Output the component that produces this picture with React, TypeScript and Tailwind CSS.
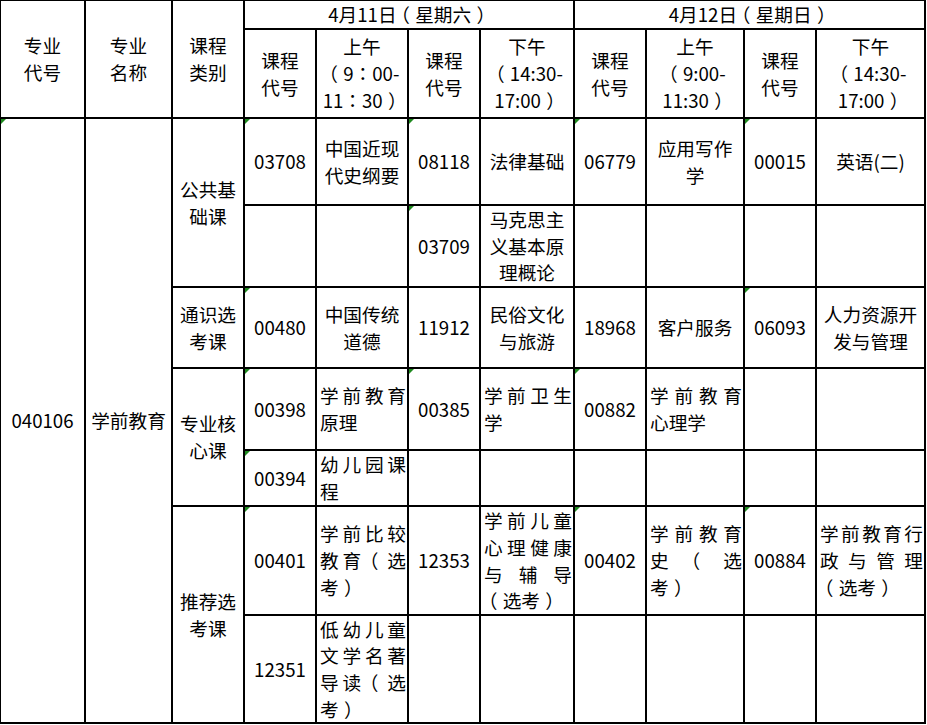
import React from "react";

type CellData = { l?: string[]; t?: boolean; j?: boolean };

function Tri() {
  return (
    <div className="absolute left-0 top-0 h-0 w-0 border-t-[5px] border-r-[5px] border-t-[#1f8a1f] border-r-transparent" />
  );
}

function Txt({ s }: { s: string }) {
  const parts = s.split(/([（）：])/);
  return (
    <>
      {parts.map((p, i) => {
        if (p === "：")
          return (
            <span key={i} className="font-['Noto_Sans_CJK_TC',sans-serif]">
              ：
            </span>
          );
        if (p === "（")
          return (
            <span key={i} className="relative left-[-0.28em]">
              （
            </span>
          );
        if (p === "）")
          return (
            <span key={i} className="relative left-[0.28em]">
              ）
            </span>
          );
        return <React.Fragment key={i}>{p}</React.Fragment>;
      })}
    </>
  );
}

function Cell({ l = [], t, j, span = "" }: CellData & { span?: string }) {
  return (
    <div className={`relative bg-white flex flex-col justify-center ${span} ${j ? "pl-[3px] pr-[1px]" : "items-center text-center px-[1px]"}`}>
      {t && <Tri />}
      {l.map((line, i) => {
        if (!j)
          return (
            <div key={i} className="whitespace-nowrap">
              <Txt s={line} />
            </div>
          );
        const last = i === l.length - 1;
        return (
          <div key={i} className={last ? "text-left whitespace-nowrap" : "w-full text-justify [text-align-last:justify]"}>
            <Txt s={line} />
          </div>
        );
      })}
    </div>
  );
}

const rows: CellData[][] = [
  [
    { l: ["03708"], t: true },
    { l: ["中国近现", "代史纲要"] },
    { l: ["08118"], t: true },
    { l: ["法律基础"] },
    { l: ["06779"], t: true },
    { l: ["应用写作", "学"] },
    { l: ["00015"], t: true },
    { l: ["英语(二)"] },
  ],
  [
    {},
    {},
    { l: ["03709"], t: true },
    { l: ["马克思主", "义基本原", "理概论"] },
    {},
    {},
    {},
    {},
  ],
  [
    { l: ["00480"], t: true },
    { l: ["中国传统", "道德"] },
    { l: ["11912"] },
    { l: ["民俗文化", "与旅游"] },
    { l: ["18968"] },
    { l: ["客户服务"] },
    { l: ["06093"], t: true },
    { l: ["人力资源开", "发与管理"] },
  ],
  [
    { l: ["00398"], t: true },
    { l: ["学前教育", "原理"], j: true },
    { l: ["00385"], t: true },
    { l: ["学前卫生", "学"], j: true },
    { l: ["00882"], t: true },
    { l: ["学前教育", "心理学"], j: true },
    {},
    {},
  ],
  [
    { l: ["00394"], t: true },
    { l: ["幼儿园课", "程"], j: true },
    {},
    {},
    {},
    {},
    {},
    {},
  ],
  [
    { l: ["00401"], t: true },
    { l: ["学前比较", "教育（选", "考）"], j: true },
    { l: ["12353"] },
    { l: ["学前儿童", "心理健康", "与辅导", "（选考）"], j: true },
    { l: ["00402"], t: true },
    { l: ["学前教育", "史（选", "考）"], j: true },
    { l: ["00884"], t: true },
    { l: ["学前教育行", "政与管理", "（选考）"], j: true },
  ],
  [
    { l: ["12351"] },
    { l: ["低幼儿童", "文学名著", "导读（选", "考）"], j: true },
    {},
    {},
    {},
    {},
    {},
    {},
  ],
];

const categories: { row: number; l: string[]; span: string }[] = [
  { row: 0, l: ["公共基", "础课"], span: "row-span-2" },
  { row: 2, l: ["通识选", "考课"], span: "" },
  { row: 3, l: ["专业核", "心课"], span: "row-span-2" },
  { row: 5, l: ["推荐选", "考课"], span: "row-span-2" },
];

export default function App() {
  const body: React.ReactNode[] = [];
  rows.forEach((r, ri) => {
    if (ri === 0) {
      body.push(<Cell key="c1" l={["040106"]} t span="row-span-7" />);
      body.push(<Cell key="c2" l={["学前教育"]} span="row-span-7" />);
    }
    const cat = categories.find((c) => c.row === ri);
    if (cat) body.push(<Cell key={`cat${ri}`} l={cat.l} span={cat.span} />);
    r.forEach((c, ci) => body.push(<Cell key={`r${ri}c${ci}`} {...c} />));
  });

  return (
    <div className="min-h-screen w-full bg-white font-['Noto_Sans_CJK_SC',sans-serif] text-[18.67px] leading-[26.7px] text-black [text-spacing-trim:space-all]">
      <div className="grid w-[926px] grid-cols-[83px_85px_70px_70px_90px_70px_92px_70px_96px_70px_107px] grid-rows-[27px_87px_85px_80px_79px_80px_54px_107px_106px] gap-[2px] bg-black pt-[1px] pl-[1px] pr-[2px] pb-[2px]">
        <Cell l={["专业", "代号"]} span="row-span-2" />
        <Cell l={["专业", "名称"]} span="row-span-2" />
        <Cell l={["课程", "类别"]} span="row-span-2" />
        <Cell l={["4月11日（星期六）"]} span="col-span-4" />
        <Cell l={["4月12日（星期日）"]} span="col-span-4" />
        <Cell l={["课程", "代号"]} />
        <Cell l={["上午", "（9：00-", "11：30）"]} />
        <Cell l={["课程", "代号"]} />
        <Cell l={["下午", "（14:30-", "17:00）"]} />
        <Cell l={["课程", "代号"]} />
        <Cell l={["上午", "（9:00-", "11:30）"]} />
        <Cell l={["课程", "代号"]} />
        <Cell l={["下午", "（14:30-", "17:00）"]} />
        {body}
      </div>
    </div>
  );
}
